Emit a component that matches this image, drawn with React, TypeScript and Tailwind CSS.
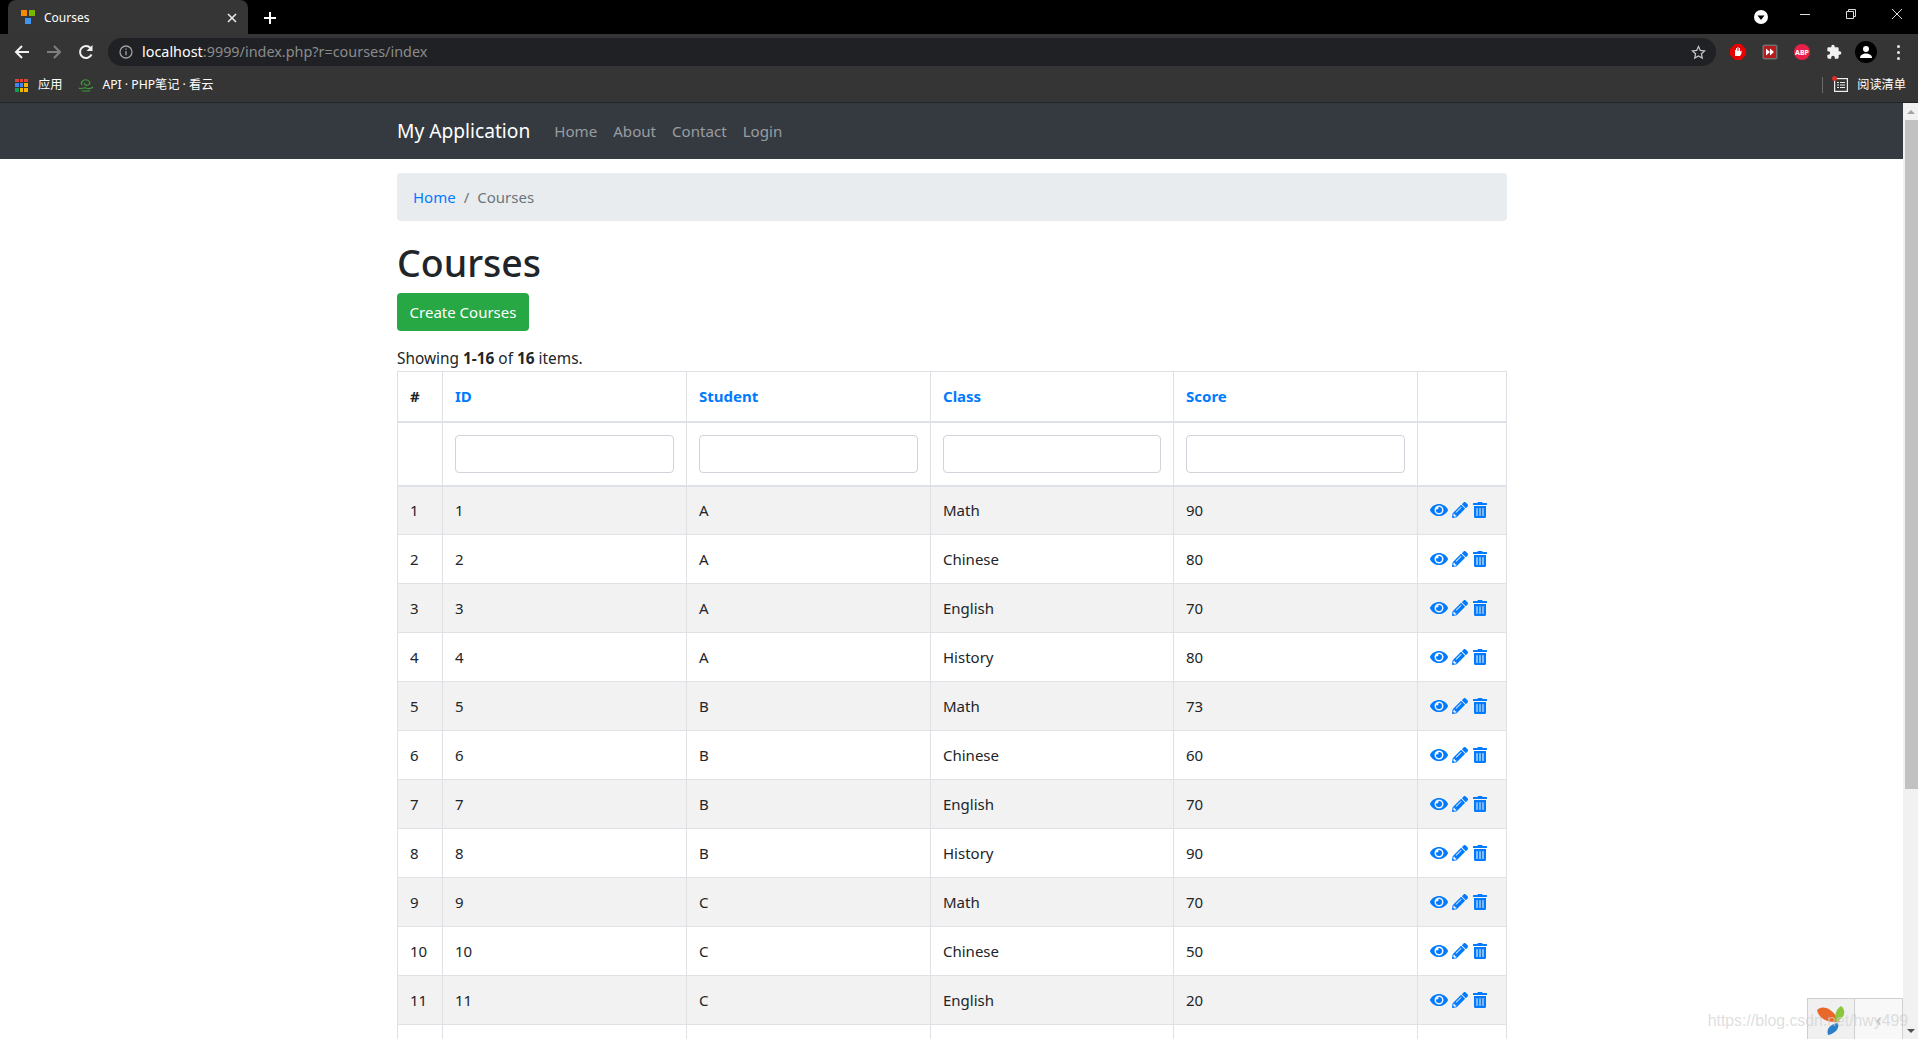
import { FaEye, FaPencilAlt, FaTrashAlt } from "react-icons/fa";

const font = { fontFamily: '"Noto Sans", "Noto Sans CJK SC", sans-serif' };

const rows: [number, string, string, number][] = [
  [1, "A", "Math", 90],
  [2, "A", "Chinese", 80],
  [3, "A", "English", 70],
  [4, "A", "History", 80],
  [5, "B", "Math", 73],
  [6, "B", "Chinese", 60],
  [7, "B", "English", 70],
  [8, "B", "History", 90],
  [9, "C", "Math", 70],
  [10, "C", "Chinese", 50],
  [11, "C", "English", 20],
];

function BrowserChrome() {
  return (
    <div className="shrink-0 text-white" style={font}>
      <div className="flex h-[34px] items-end bg-black pl-2">
        <div className="flex h-[34px] w-[240px] items-center rounded-t-lg bg-[#363636] pl-[13px] pr-[11px] pt-[2px]">
          <svg width="16" height="16" viewBox="0 0 16 16" className="shrink-0">
            <rect x="0" y="0" width="6" height="6" fill="#f58b00" />
            <rect x="8" y="0" width="6" height="6" fill="#7ab800" />
            <rect x="4" y="8" width="6" height="6" fill="#3f96f0" />
          </svg>
          <span className="ml-[7px] flex-1 text-[12px]">Courses</span>
          <svg width="10" height="10" viewBox="0 0 10 10" stroke="#e8e8e8" strokeWidth="1.6"><path d="M1 1l8 8M9 1l-8 8" /></svg>
        </div>
        <div className="ml-4 flex h-[34px] items-center pt-[1px]">
          <svg width="12" height="12" viewBox="0 0 12 12" stroke="#fff" strokeWidth="2"><path d="M6 0v12M0 6h12" /></svg>
        </div>
        <div className="ml-auto flex h-[34px] items-center">
          <svg width="14" height="14" viewBox="0 0 14 14" className="mr-[32px]"><circle cx="7" cy="7" r="7" fill="#fff" /><path d="M3.5 5.5h7L7 10z" fill="#000" /></svg>
          <svg width="10" height="10" viewBox="0 0 10 10" stroke="#ddd" className="mr-[36px] mb-[6px]"><path d="M0 5.5h10" /></svg>
          <svg width="10" height="10" viewBox="0 0 10 10" stroke="#ddd" fill="none" className="mr-[35px] mb-[6px]"><path d="M.5 2.5h7v7h-7zM2.5 2.5v-2h7v7h-2" /></svg>
          <svg width="12" height="12" viewBox="0 0 12 12" stroke="#ddd" className="mr-[15px] mb-[6px]"><path d="M1 1l10 10M11 1L1 11" /></svg>
        </div>
      </div>
      <div className="flex h-[34px] items-center bg-[#353535] pl-[14px] pr-[18px] pt-[2px]">
        <svg width="16" height="16" viewBox="0 0 16 16" fill="none" stroke="#f1f1f1" strokeWidth="2"><path d="M15 8H2M8 2L2 8l6 6" /></svg>
        <svg width="16" height="16" viewBox="0 0 16 16" fill="none" stroke="#7f7f7f" strokeWidth="2" className="ml-[16px]"><path d="M1 8h13M8 2l6 6-6 6" /></svg>
        <svg width="16" height="16" viewBox="0 0 16 16" fill="none" stroke="#f1f1f1" strokeWidth="2" className="ml-[16px]"><path d="M13.5 10.5A6 6 0 1 1 12.5 4" /><path d="M14.5 1v6h-6z" fill="#f1f1f1" stroke="none" /></svg>
        <div className="ml-[14px] flex h-[28px] flex-1 items-center rounded-full bg-[#202124] pl-[11px] pr-[10px]">
          <svg width="14" height="14" viewBox="0 0 14 14" fill="none" stroke="#a0a0a0" strokeWidth="1.3"><circle cx="7" cy="7" r="6" /><path d="M7 6v4.2M7 3.4v1.3" /></svg>
          <span className="ml-[9px] flex-1 text-[14.4px] text-[#8a8b8d]"><span className="text-white">localhost</span>:9999/index.php?r=courses/index</span>
          <svg width="15" height="15" viewBox="0 0 24 24" fill="none" stroke="#c8c8c8" strokeWidth="2"><path d="M12 2.5l2.9 6.2 6.8.8-5 4.6 1.3 6.7-6-3.4-6 3.4 1.3-6.7-5-4.6 6.8-.8z" /></svg>
        </div>
        <div className="ml-[14px]">
          <svg width="16" height="16" viewBox="0 0 16 16" className="block"><path d="M5 0h6l5 5v6l-5 5H5l-5-5V5z" fill="#e60000" /><path d="M5 12V6h1v-2h1v3h.5V3h1v4H9V4h1v3.5l1.5-1v3L10 12z" fill="#fff" /></svg>
        </div>
        <div className="ml-[16px]"><svg width="16" height="16" viewBox="0 0 16 16" className="block"><rect x=".5" y=".5" width="15" height="15" rx="2" fill="#e0e0e0" opacity=".35" /><rect x="2" y="2" width="12" height="12" rx="1" fill="#b71c1c" /><path d="M4 4.5L8 8l-4 3.5zM8 4.5L12 8l-4 3.5z" fill="#fff" /></svg></div>
        <div className="ml-[16px] flex h-4 w-4 items-center justify-center rounded-full bg-[#e8204a] text-[7px] font-bold leading-none text-white">ABP</div>
        <div className="ml-[16px]"><svg width="16" height="16" viewBox="0 0 24 24" fill="#f1f1f1" className="block"><path d="M20.5 11H19V7a2 2 0 0 0-2-2h-4V3.500a2.500 2.500 0 0 0-5 0V5H4a2 2 0 0 0-2 2v3.800h1.500a2.700 2.700 0 0 1 0 5.400H2V20a2 2 0 0 0 2 2h3.800v-1.500a2.700 2.700 0 0 1 5.400 0V22H17a2 2 0 0 0 2-2v-4h1.500a2.500 2.500 0 0 0 0-5z" /></svg></div>
        <div className="ml-[13px] flex h-[22px] w-[22px] items-center justify-center rounded-full bg-black">
          <svg width="14" height="14" viewBox="0 0 14 14" fill="#fff"><circle cx="7" cy="4" r="3" /><path d="M1 13c0-3 3-4.500 6-4.500s6 1.500 6 4.500z" /></svg>
        </div>
        <div className="ml-[20px] flex flex-col gap-[3px]">
          <span className="h-[3px] w-[3px] rounded-full bg-[#e8e8e8]" />
          <span className="h-[3px] w-[3px] rounded-full bg-[#e8e8e8]" />
          <span className="h-[3px] w-[3px] rounded-full bg-[#e8e8e8]" />
        </div>
      </div>
      <div className="flex h-[35px] items-center border-b border-[#222426] bg-[#353535] pl-[15px] pr-[12px] text-[12.2px]">
        <div className="grid h-[13px] w-[13px] grid-cols-3 gap-[1px]">
          {["#db4437", "#db4437", "#db4437", "#4285f4", "#4285f4", "#f4b400", "#0f9d58", "#f4b400", "#f4b400"].map((c, i) => (
            <span key={i} style={{ backgroundColor: c }} />
          ))}
        </div>
        <span className="ml-[10px]">应用</span>
        <svg width="16" height="14" viewBox="0 0 16 14" fill="none" stroke="#3e9a3a" strokeWidth="1.200" className="ml-[16px]"><path d="M4 7c-2-3 2-6 5-5s4 4 1 5-4-1-3-2" /><path d="M1 10c2 2 4-1 7 0s5 1 7-1M4 13h8" /></svg>
        <span className="ml-[8px]">API · PHP笔记 · 看云</span>
        <div className="ml-auto flex items-center">
          <span className="h-[16px] w-px bg-[#6a6a6a]" />
          <div className="relative ml-[11px]">
            <svg width="14" height="14" viewBox="0 0 14 14" fill="none" stroke="#eee" strokeWidth="1.200" className="block"><rect x=".6" y=".6" width="12.800" height="12.800" /><path d="M3 4.500h2M6 4.500h5M3 7h2M6 7h5M3 9.500h2M6 9.500h5" /></svg>
            <span className="absolute -left-[2px] -top-[2px] h-[5px] w-[5px] rounded-full bg-[#d93025]" />
          </div>
          <span className="ml-[9px]">阅读清单</span>
        </div>
      </div>
    </div>
  );
}

function Scrollbar() {
  return (
    <div className="flex w-[15px] shrink-0 flex-col bg-[#f1f1f1]">
      <div className="flex h-[17px] items-center justify-center">
        <span className="h-0 w-0 border-x-[4px] border-b-[4px] border-x-transparent border-b-[#a3a3a3]" />
      </div>
      <div className="h-[669px] w-[13px] self-end bg-[#c1c1c1]" />
      <div className="mt-auto flex h-[17px] items-center justify-center">
        <span className="h-0 w-0 border-x-[4px] border-t-[4px] border-x-transparent border-t-[#505050]" />
      </div>
    </div>
  );
}

function Table() {
  const cell = "border border-[#dee2e6] px-3 align-middle";
  return (
    <table className="w-[1109px] table-fixed border-collapse text-[15px] text-[#212529]">
      <colgroup>
        <col className="w-[45px]" />
        <col className="w-[244px]" />
        <col className="w-[244px]" />
        <col className="w-[243px]" />
        <col className="w-[244px]" />
        <col className="w-[89px]" />
      </colgroup>
      <thead>
        <tr className="h-[50px]">
          <th className={`${cell} border-b-2 text-left font-bold`}>#</th>
          {["ID", "Student", "Class", "Score"].map((h) => (
            <th key={h} className={`${cell} border-b-2 text-left font-bold text-[#007bff]`}>{h}</th>
          ))}
          <th className={`${cell} border-b-2`} />
        </tr>
        <tr className="h-[64px]">
          <td className={`${cell} border-b-2`} />
          {[0, 1, 2, 3].map((i) => (
            <td key={i} className={`${cell} border-b-2`}>
              <input className="block h-[38px] w-full rounded border border-[#ced4da] bg-white" />
            </td>
          ))}
          <td className={`${cell} border-b-2`} />
        </tr>
      </thead>
      <tbody>
        {rows.map(([id, s, c, score]) => (
          <tr key={id} className={`h-[49px] ${id % 2 === 1 ? "bg-[#f2f2f2]" : "bg-white"}`}>
            <td className={cell}>{id}</td>
            <td className={cell}>{id}</td>
            <td className={cell}>{s}</td>
            <td className={cell}>{c}</td>
            <td className={cell}>{score}</td>
            <td className={cell}>
              <div className="flex items-center gap-[4px] text-[#007bff]">
                <FaEye size={18} />
                <FaPencilAlt size={16} />
                <FaTrashAlt size={16} />
              </div>
            </td>
          </tr>
        ))}
        <tr className="h-[49px] bg-white">
          {[0, 1, 2, 3, 4, 5].map((i) => (
            <td key={i} className={cell} />
          ))}
        </tr>
      </tbody>
    </table>
  );
}

export default function App() {
  return (
    <div className="flex h-[1039px] w-[1918px] flex-col overflow-hidden bg-white" style={font}>
      <BrowserChrome />
      <div className="relative flex min-h-0 flex-1">
        <div className="min-w-0 flex-1 overflow-hidden">
          <nav className="h-[56px] bg-[#343a40] pl-[397px]">
            <div className="flex h-full items-center">
              <span className="text-[19.2px] text-white">My Application</span>
              <div className="ml-6 flex gap-4 text-[15.1px] text-[#9a9da0]">
                <span>Home</span>
                <span>About</span>
                <span>Contact</span>
                <span>Login</span>
              </div>
            </div>
          </nav>
          <main className="ml-[397px] w-[1110px] pt-[14px]">
            <div className="mb-4 flex h-[48px] items-center rounded bg-[#e9ecef] px-4 text-[15px]">
              <span className="text-[#007bff]">Home</span>
              <span className="px-2 text-[#6c757d]">/</span>
              <span className="text-[#6c757d]">Courses</span>
            </div>
            <h1 className="mb-2 h-[48px] text-[37.5px] font-medium leading-[52px] text-[#212529]">Courses</h1>
            <button className="mb-4 block h-[38px] w-[132px] rounded bg-[#28a745] text-[15px] text-white">Create Courses</button>
            <div className="text-[15.4px] leading-[24px] text-[#212529]">Showing <b>1-16</b> of <b>16</b> items.</div>
            <Table />
          </main>
        </div>
        <Scrollbar />
        <div className="absolute bottom-0 right-[15px] flex h-[41px] w-[96px] border border-b-0 border-[#cfcfcf]">
          <div className="flex w-[47px] items-center justify-center border-r border-[#cfcfcf] bg-[#f0f0f0]">
            <svg width="30" height="32" viewBox="0 0 30 32">
              <path d="M1 7C6 2 16 4 24 19 14 20 3 17 1 7z" fill="#e8682a" />
              <path d="M25 3c5 4 5 11-5 16-2-7 0-13 5-16z" fill="#8cc63f" />
              <path d="M22 20c2 6-4 11-10 12-2-6 2-11 10-12z" fill="#2b7fc9" />
            </svg>
          </div>
          <div className="flex flex-1 items-center justify-center bg-[#f8f8f8] text-[18px] text-[#bbbbbb]">‹</div>
        </div>
        <div className="pointer-events-none absolute bottom-[6px] right-[10px] text-[15.8px] text-[#d0d0d0]/70" style={{ fontFamily: '"Liberation Sans", sans-serif' }}>
          https://blog.csdn.net/hwy499
        </div>
      </div>
    </div>
  );
}
